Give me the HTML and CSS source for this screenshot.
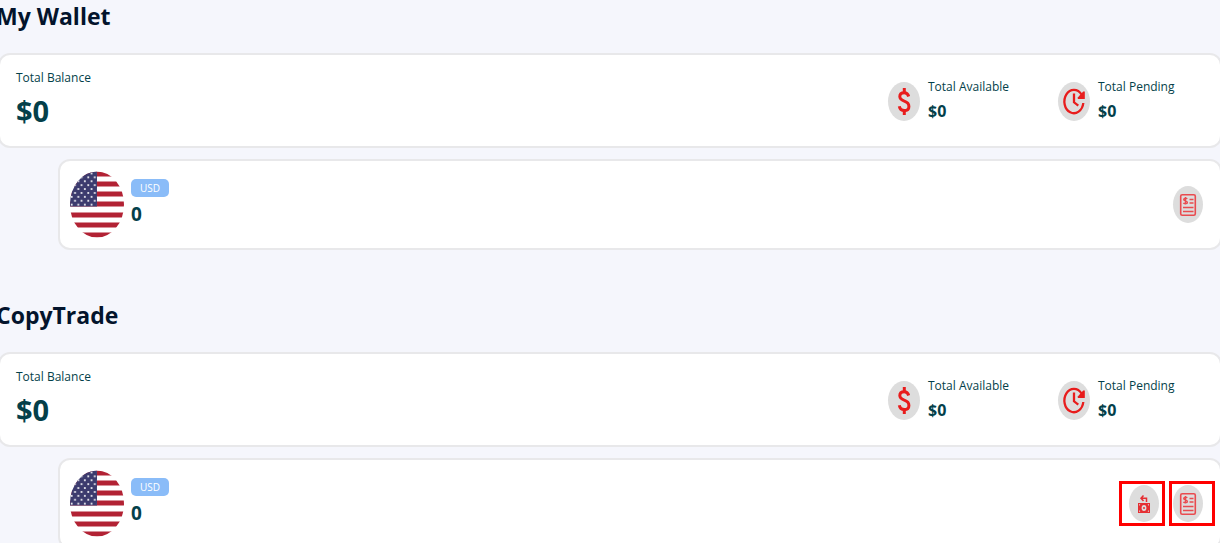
FILE: index.html
```html
<!DOCTYPE html>
<html lang="en">
<head>
<meta charset="utf-8">
<title>My Wallet</title>
<link rel="stylesheet" href="styles.css">
</head>
<body>
<svg class="defs" aria-hidden="true">
  <defs>
    <pattern id="stars" width="6.600" height="7.800" patternUnits="userSpaceOnUse">
      <circle cx="1.700" cy="2" r="1" fill="#fff"/><circle cx="5" cy="5.900" r="1" fill="#fff"/>
    </pattern>
    <clipPath id="oval"><ellipse cx="27" cy="33" rx="27" ry="33"/></clipPath>
    <symbol id="flag" viewBox="0 0 54 66">
      <g clip-path="url(#oval)">
        <path fill="#fff" d="M0 0h54v66H0z"/>
        <path fill="#b22234" d="M0 0h54v5H0zM0 10h54v5H0zM0 20h54v5H0zM0 30h54v5H0zM0 41h54v5H0zM0 51h54v5H0zM0 61h54v5H0z"/>
        <path fill="#3c3b6e" d="M0 0h27v35H0z"/>
        <path fill="url(#stars)" d="M0 0h27v35H0z"/>
      </g>
    </symbol>
    <symbol id="dollar" viewBox="0 0 32 39">
      <g fill="none" stroke="#e81c1c" stroke-width="3">
        <path d="M20.700 14.500C20 11.800 18.500 10.800 16.300 10.800C13.300 10.800 11.800 12.300 11.800 14.600C11.800 17.200 13.600 18.200 16.300 19.200C19.200 20.200 20.900 21.500 20.900 24.400C20.900 27 19.200 28.500 16.400 28.500C13.400 28.500 11.800 27 11.300 24.200"/>
        <path d="M16.300 6v5M16.300 28v5"/>
      </g>
    </symbol>
    <symbol id="pending" viewBox="0 0 32 39">
      <g fill="none" stroke="#e81c1c" stroke-width="2.300">
        <path d="M23.500 12.500A9.500 11.700 0 1 0 25.300 21"/>
        <path d="M16 11.500v8.800l4.300 3.300"/>
      </g>
      <path fill="#e81c1c" d="M25.200 9.500h1.600v7.500h-7v-1.500z"/>
    </symbol>
    <symbol id="report" viewBox="0 0 30 37">
      <g fill="none" stroke="#e94b4f">
        <rect x="7.700" y="8.700" width="14.600" height="20.600" rx="1.500" stroke-width="1.600"/>
        <path stroke-width="1.400" d="M16.500 13.500h4M16.500 17h4M10 21.500h10.500M10 25.500h10.500"/>
        <path stroke-width="1.400" d="M14.200 12.800c-.5-.8-3.500-.9-3.500.8 0 1.600 3.700 1.100 3.700 2.800 0 1.600-3.400 1.600-4 .5M12.500 11v7.500"/>
      </g>
    </symbol>
    <symbol id="withdraw" viewBox="0 0 30 37">
      <path fill="#e52f33" fill-rule="evenodd" d="M9 18h12v10H9zM15 20a2.400 3 0 1 0 0 6 2.400 3 0 1 0 0-6z"/>
      <path fill="#ddd" d="M10 19.200h1.400L10 21zM20 19.200h-1.400L20 21zM10 26.800h1.400L10 25zM20 26.800h-1.400L20 25z"/>
      <circle cx="15" cy="23" r="1" fill="#e52f33"/>
      <path fill="none" stroke="#e52f33" stroke-width="1.500" d="M14.500 10.500l-2.500 2.800 2.500 2.800M12 13.300h5.500v3.700"/>
    </symbol>
  </defs>
</svg>
<main class="page">
  <section class="wallet">
    <h2 class="title">My Wallet</h2>
    <div class="card summary">
      <div class="balance"><span class="label">Total Balance</span><strong class="total">$0</strong></div>
      <div class="stat">
        <svg class="stat-icon" aria-hidden="true"><use href="#dollar"/></svg>
        <div class="stat-text"><span class="label">Total Available</span><strong class="amount">$0</strong></div>
      </div>
      <div class="stat">
        <svg class="stat-icon" aria-hidden="true"><use href="#pending"/></svg>
        <div class="stat-text"><span class="label">Total Pending</span><strong class="amount">$0</strong></div>
      </div>
    </div>
    <div class="card account">
      <svg class="flag" role="img" aria-label="United States"><use href="#flag"/></svg>
      <div class="currency"><span class="badge">USD</span><strong class="quantity">0</strong></div>
      <div class="actions">
        <button class="action" type="button" aria-label="Statement"><svg class="action-icon"><use href="#report"/></svg></button>
      </div>
    </div>
  </section>
  <section class="wallet">
    <h2 class="title">CopyTrade</h2>
    <div class="card summary">
      <div class="balance"><span class="label">Total Balance</span><strong class="total">$0</strong></div>
      <div class="stat">
        <svg class="stat-icon" aria-hidden="true"><use href="#dollar"/></svg>
        <div class="stat-text"><span class="label">Total Available</span><strong class="amount">$0</strong></div>
      </div>
      <div class="stat">
        <svg class="stat-icon" aria-hidden="true"><use href="#pending"/></svg>
        <div class="stat-text"><span class="label">Total Pending</span><strong class="amount">$0</strong></div>
      </div>
    </div>
    <div class="card account">
      <svg class="flag" role="img" aria-label="United States"><use href="#flag"/></svg>
      <div class="currency"><span class="badge">USD</span><strong class="quantity">0</strong></div>
      <div class="actions">
        <button class="action marked marked-start" type="button" aria-label="Withdraw"><svg class="action-icon"><use href="#withdraw"/></svg></button>
        <button class="action marked marked-end" type="button" aria-label="Statement"><svg class="action-icon"><use href="#report"/></svg></button>
      </div>
    </div>
  </section>
</main>
</body>
</html>
```
FILE: styles.css
```css
* { box-sizing: border-box; }
body {
  margin: 0;
  background: #f5f6fc;
  color: #043f4a;
  font-family: "Open Sans", "Noto Sans", sans-serif;
  overflow: hidden;
}
.defs { position: absolute; width: 0; height: 0; }
.page { margin: 0 -2px; }
.wallet { margin-bottom: 49px; }
.title {
  margin: 0 0 20px -2px;
  color: #03142c;
  font-size: 23px;
  font-weight: 700;
  line-height: 33px;
}
.card {
  background: #fff;
  border: 2px solid #e8e8ea;
  border-radius: 12px;
}
.summary {
  display: grid;
  grid-template-columns: 1fr 170px 162px;
  padding: 14px 0 12px 16px;
}
.balance, .stat-text, .currency { display: flex; flex-direction: column; }
.label { font-size: 12px; line-height: 18px; }
.total { font-size: 29px; font-weight: 700; line-height: 47px; }
.stat { display: flex; align-items: center; gap: 8px; }
.stat-icon {
  width: 32px;
  height: 39px;
  border-radius: 50%;
  background: #ddd;
}
.amount { font-size: 16px; font-weight: 700; line-height: 30px; }
.account {
  display: flex;
  align-items: center;
  gap: 7px;
  margin: 11px 0 0 60px;
  padding: 10px 17px 10px 10px;
}
.flag { width: 54px; height: 67px; }
.currency { align-items: flex-start; gap: 4px; padding-bottom: 4px; }
.badge {
  padding: 0 9px;
  border-radius: 5px;
  background: #8abcf8;
  color: #fff;
  font-size: 10px;
  line-height: 18px;
}
.quantity { font-size: 19px; font-weight: 700; line-height: 26px; }
.actions { display: flex; gap: 14px; margin-left: auto; }
.action {
  position: relative;
  padding: 0;
  border: 0;
  border-radius: 50%;
  background: #ddd;
}
.action-icon { display: block; width: 30px; height: 37px; }
.marked::after {
  content: "";
  position: absolute;
  border: 3px solid #f00;
}
.marked-start::after { inset: -4px -6px -4px -10px; }
.marked-end::after { inset: -4px -12px -4px -4px; }
```
